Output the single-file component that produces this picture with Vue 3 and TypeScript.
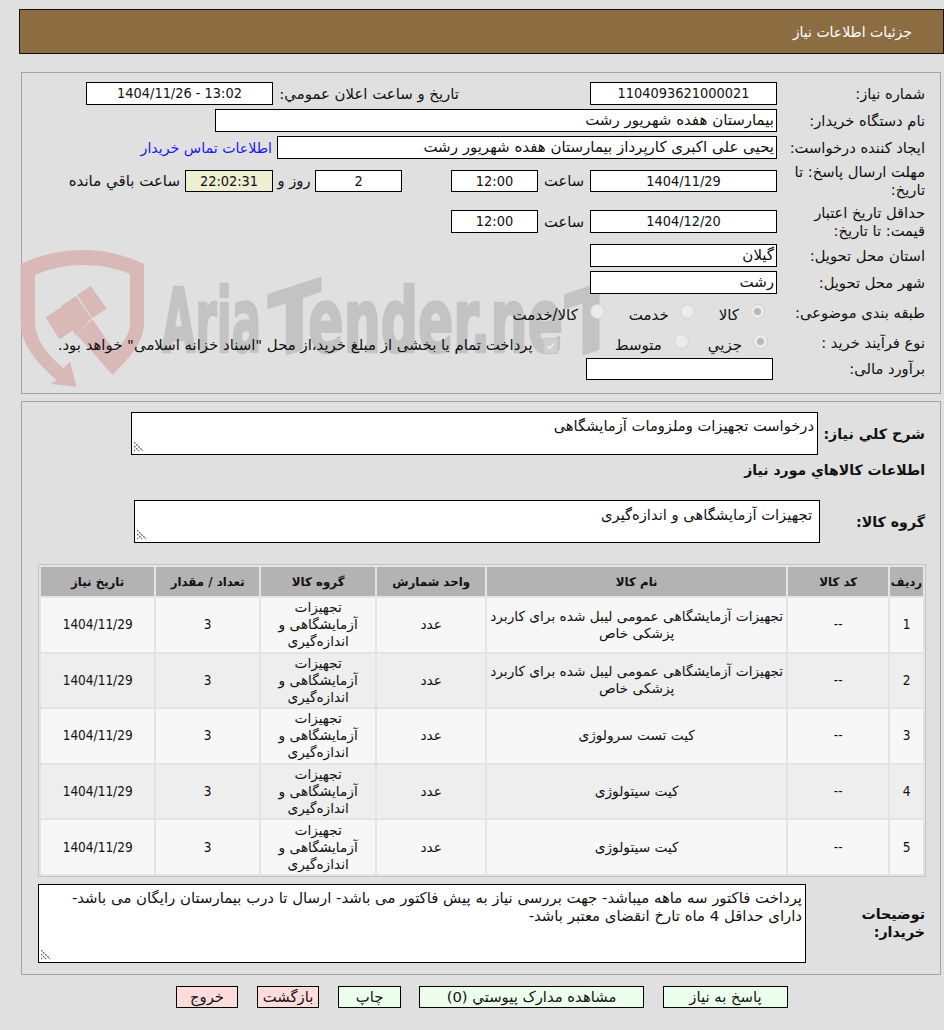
<script setup lang="ts">
interface Row { id: number; name: string; unit: string; group: string; qty: number; date: string }
const groupName = 'تجهیزات آزمایشگاهی و اندازه‌گیری'
const longName = 'تجهیزات آزمایشگاهی عمومی لیبل شده برای کاربرد پزشکی خاص'
const rows: Row[] = [
  { id: 1, name: longName, unit: 'عدد', group: groupName, qty: 3, date: '1404/11/29' },
  { id: 2, name: longName, unit: 'عدد', group: groupName, qty: 3, date: '1404/11/29' },
  { id: 3, name: 'کیت تست سرولوژی', unit: 'عدد', group: groupName, qty: 3, date: '1404/11/29' },
  { id: 4, name: 'کیت سیتولوژی', unit: 'عدد', group: groupName, qty: 3, date: '1404/11/29' },
  { id: 5, name: 'کیت سیتولوژی', unit: 'عدد', group: groupName, qty: 3, date: '1404/11/29' },
]
</script>

<template>
  <div class="page" dir="rtl">
    <header class="title">جزئیات اطلاعات نیاز</header>

    <section class="panel info">
      <svg class="mark" viewBox="0 0 1800 480" width="600" height="160" aria-hidden="true">
        <path class="pink" d="M62 72C120 45 180 30 250 30C320 30 380 48 432 72L432 250C432 310 385 355 338 405L228 282L277 238L345 335C370 310 390 280 390 250L390 102C350 85 300 75 250 75C200 75 150 85 105 105L105 240C105 300 140 340 190 385L210 365L230 440L152 432L170 420C110 370 62 310 62 250Z" />
        <path class="pink" d="M137 232L183 202L225 268L178 298ZM183 198L228 168L275 235L225 285ZM232 165L272 138L320 205L277 235Z" />
        <text class="brand" x="485" y="335" textLength="298" lengthAdjust="spacingAndGlyphs">Aria</text>
        <text class="brand" transform="translate(805 360) skewY(-18)" textLength="157" lengthAdjust="spacingAndGlyphs">T</text>
        <text class="brand" x="925" y="335" textLength="764" lengthAdjust="spacingAndGlyphs">ender.ne</text>
        <text class="brand" transform="translate(1695 360) skewY(-18)" textLength="156" lengthAdjust="spacingAndGlyphs">T</text>
      </svg>

      <div class="row">
        <span class="lbl">شماره نیاز:</span>
        <span class="box c num w187">1104093621000021</span>
        <span class="announce">تاریخ و ساعت اعلان عمومي:</span>
        <span class="box c num w187" dir="ltr">1404/11/26 - 13:02</span>
      </div>
      <div class="row">
        <span class="lbl">نام دستگاه خریدار:</span>
        <span class="box w562">بیمارستان هفده شهریور رشت</span>
      </div>
      <div class="row">
        <span class="lbl">ایجاد کننده درخواست:</span>
        <span class="box w500">یحیی علی اکبری کارپرداز بیمارستان هفده شهریور رشت</span>
        <a class="contact">اطلاعات تماس خریدار</a>
      </div>
      <div class="row r2">
        <span class="lbl wrap">مهلت ارسال پاسخ: تا تاریخ:</span>
        <span class="box c num w187 h22">1404/11/29</span>
        <span class="saat">ساعت</span>
        <span class="box c num w87 h22">12:00</span>
        <span class="box c num w87 h22 days">2</span>
        <span class="rooz">روز و</span>
        <span class="box c num timer h22">22:02:31</span>
        <span class="remain">ساعت باقي مانده</span>
      </div>
      <div class="row r2b">
        <span class="lbl wrap">حداقل تاریخ اعتبار قیمت: تا تاریخ:</span>
        <span class="box c num w187">1404/12/20</span>
        <span class="saat">ساعت</span>
        <span class="box c num w87">12:00</span>
      </div>
      <div class="row">
        <span class="lbl">استان محل تحویل:</span>
        <span class="box w187">گیلان</span>
      </div>
      <div class="row">
        <span class="lbl">شهر محل تحویل:</span>
        <span class="box w187">رشت</span>
      </div>
      <div class="row r3 first-opts">
        <span class="lbl">طبقه بندی موضوعی:</span>
        <span class="radio on m12"></span><span class="opt m11">کالا</span>
        <span class="radio m24"></span><span class="opt m11">خدمت</span>
        <span class="radio m24"></span><span class="opt m12">کالا/خدمت</span>
      </div>
      <div class="row r3">
        <span class="lbl">نوع فرآیند خرید :</span>
        <span class="radio on m9"></span><span class="opt m11">جزیي</span>
        <span class="radio m19"></span><span class="opt m12">متوسط</span>
        <span class="check">
          <svg viewBox="0 0 16 16" width="16" height="16"><path d="M4 8l3 3 5-6" fill="none" stroke="#ececec" stroke-width="2" /></svg>
        </span>
        <span class="opt m10 pay">پرداخت تمام یا بخشی از مبلغ خرید،از محل "اسناد خزانه اسلامی" خواهد بود.</span>
      </div>
      <div class="row r5">
        <span class="lbl">برآورد مالی:</span>
        <span class="box w187 h22 est"></span>
      </div>
    </section>

    <section class="panel needs">
      <div class="desc-row">
        <span class="blbl dlbl">شرح کلي نیاز:</span>
        <div class="area a1">درخواست تجهیزات وملزومات آزمایشگاهی
          <svg class="grip" viewBox="0 0 10 10" width="10" height="10"><path d="M0 0L9 9M0 4L5 9M0 8L1 9" stroke="#666" stroke-width="1.300" stroke-dasharray="2 1" fill="none" /></svg>
        </div>
      </div>
      <h3 class="subhead">اطلاعات کالاهاي مورد نیاز</h3>
      <div class="group-row">
        <span class="blbl glbl">گروه کالا:</span>
        <div class="area a2">تجهیزات آزمایشگاهی و اندازه‌گیری
          <svg class="grip" viewBox="0 0 10 10" width="10" height="10"><path d="M0 0L9 9M0 4L5 9M0 8L1 9" stroke="#666" stroke-width="1.300" stroke-dasharray="2 1" fill="none" /></svg>
        </div>
      </div>

      <div class="table-wrap">
        <table>
          <colgroup>
            <col class="k1" /><col class="k2" /><col class="k3" /><col class="k4" /><col class="k5" /><col class="k6" /><col class="k7" />
          </colgroup>
          <thead>
            <tr>
              <th>ردیف</th><th>کد کالا</th><th>نام کالا</th><th>واحد شمارش</th><th>گروه کالا</th><th>تعداد / مقدار</th><th>تاریخ نیاز</th>
            </tr>
          </thead>
          <tbody>
            <tr v-for="r in rows" :key="r.id">
              <td class="num">{{ r.id }}</td>
              <td class="num">--</td>
              <td>{{ r.name }}</td>
              <td>{{ r.unit }}</td>
              <td class="grp">{{ r.group }}</td>
              <td class="num">{{ r.qty }}</td>
              <td class="num">{{ r.date }}</td>
            </tr>
          </tbody>
        </table>
      </div>

      <div class="notes-row">
        <span class="blbl nlbl">توضیحات خریدار:</span>
        <div class="area a3">پرداخت فاکتور سه ماهه میباشد- جهت بررسی نیاز به پیش فاکتور می باشد- ارسال تا درب بیمارستان رایگان می باشد-<br />دارای حداقل 4 ماه تارخ انقضای معتبر باشد-
          <svg class="grip" viewBox="0 0 10 10" width="10" height="10"><path d="M0 0L9 9M0 4L5 9M0 8L1 9" stroke="#666" stroke-width="1.300" stroke-dasharray="2 1" fill="none" /></svg>
        </div>
      </div>
    </section>

    <footer class="actions">
      <button class="btn g b1">پاسخ به نیاز</button>
      <button class="btn g b2">مشاهده مدارک پیوستي (0)</button>
      <button class="btn g b3">چاپ</button>
      <button class="btn r b4">بازگشت</button>
      <button class="btn r b5">خروج</button>
    </footer>
  </div>
</template>

<style>
html, body { margin: 0; background: #e0e0e0; }
</style>

<style scoped>
.page {
  width: 944px; height: 1030px; box-sizing: border-box; padding-top: 9px;
  background: #e0e0e0; color: #111; overflow: hidden;
  font-family: "DejaVu Sans", sans-serif; font-size: 14.700px; line-height: 18px;
}
.num { font-family: "DejaVu Sans Condensed", "DejaVu Sans", sans-serif; font-size: 14.400px; }
.title {
  box-sizing: border-box; height: 45px; width: 925px;
  background: #8c6d42; border: 1px solid #111; color: #fff; padding: 13px 31px 0 0;
  font-size: 14px;
}
.panel { border: 1px solid #a3a3a3; box-sizing: border-box; margin-right: 3px; width: 920px; position: relative; }
.info { height: 322px; margin-top: 18px; padding-top: 7px; }
.mark { position: absolute; left: -22px; top: 167px; direction: ltr; pointer-events: none; }
.pink { fill: #d9b8b8; }
.brand {
  font-family: "DejaVu Sans Condensed", "DejaVu Sans", sans-serif; font-weight: 700; font-size: 267px;
  fill: #c3c3c3; stroke: #c3c3c3; stroke-width: 8px; stroke-linejoin: round;
}
.row { display: flex; align-items: center; height: 27px; position: relative; }
.lbl { width: 163px; box-sizing: border-box; padding-right: 15px; flex: none; white-space: nowrap; }
.lbl.wrap { white-space: normal; padding-left: 12px; }
.box {
  box-sizing: border-box; height: 23px; background: #fff; border: 1px solid #000; padding: 0 2px;
  line-height: 21px; flex: none; white-space: nowrap; overflow: hidden; font-size: 15px;
}
.box.num { font-size: 14.400px; }
.c { text-align: center; }
.h22 { height: 22px; line-height: 20px; }
.w187 { width: 187px; }
.w562 { width: 562px; }
.w500 { width: 500px; }
.w87 { width: 87px; }
.announce { margin-right: 131px; width: 186px; box-sizing: border-box; flex: none; white-space: nowrap; font-size: 14.900px; }
.contact { color: #1a1aee; margin-right: 5px; white-space: nowrap; font-size: 14.200px; }
.r2 { height: 40px; }
.r2b { height: 41px; }
.saat { width: 52px; text-align: center; flex: none; }
.days { margin-right: 49px; }
.rooz { width: 42px; text-align: center; flex: none; white-space: nowrap; }
.timer { width: 88px; background: #eeeed0; }
.remain { margin-right: 5px; white-space: nowrap; font-size: 15px; }
.r3 { height: 30px; }
.first-opts { margin-top: 2px; }
.radio {
  box-sizing: border-box; width: 15px; height: 15px; border-radius: 50%; border: 1px solid #d2d2d2; background: #ebebeb;
  flex: none; margin-top: -3px; position: relative;
}
.radio.on::after { content: ""; position: absolute; inset: 3px; border-radius: 50%; background: #b8b8b8; }
.opt { white-space: nowrap; margin-top: 4px; flex: none; font-size: 15px; }
.pay { font-size: 14.900px; }
.m9 { margin-right: 9px; }
.m10 { margin-right: 10px; }
.m11 { margin-right: 11px; }
.m12 { margin-right: 12px; }
.m19 { margin-right: 19px; }
.m24 { margin-right: 24px; }
.check {
  width: 15px; height: 16px; margin: 5px 57px 0 0; flex: none; background: #cfcfcf; border: 1px solid #c4c4c4;
  box-sizing: border-box; display: block; line-height: 0;
}
.check svg { width: 13px; height: 14px; }
.r5 { height: 22px; }
.est { margin-right: 4px; }

.needs { margin-top: 7px; height: 574px; padding-top: 10px; }
.blbl { font-weight: 700; font-size: 14.200px; white-space: nowrap; flex: none; box-sizing: border-box; }
.desc-row { display: flex; align-items: center; height: 43px; padding-right: 15px; }
.dlbl { width: 107px; }
.area {
  box-sizing: border-box; background: #fff; border: 1px solid #000; position: relative; line-height: 18px; font-size: 14.700px; flex: none;
}
.a1 { width: 687px; height: 43px; padding: 4px 3px 0; }
.subhead { margin: 5px 15px 0 0; font-size: 14px; line-height: 20px; }
.group-row { display: flex; align-items: center; height: 43px; margin-top: 20px; padding-right: 15px; }
.glbl { width: 105px; }
.a2 { width: 686px; height: 43px; padding: 5px 7px 0; }
.grip { position: absolute; left: 2px; bottom: 2px; }
.table-wrap { margin: 21px 14px 0 0; width: 888px; box-sizing: border-box; border: 1px solid #c4c4c4; background: #e4e4e4; }
table { border-collapse: separate; border-spacing: 2px; width: 886px; table-layout: fixed; font-size: 13.700px; }
.k1 { width: 33px; } .k2 { width: 99.700px; } .k3 { width: 299.300px; } .k4 { width: 107.700px; } .k5 { width: 114.300px; } .k6 { width: 102.700px; } .k7 { width: 113.300px; }
th { background: #b3b3b3; height: 29px; padding: 0; font-weight: 700; font-size: 11.800px; }
td { height: 53.600px; padding: 0 1px; text-align: center; background: #f7f7f7; line-height: 17px; }
td.num { font-size: 13.500px; }
tbody tr:nth-child(even) td { background: #eeeeee; }
.grp { padding: 0 6px; }
.notes-row { display: flex; align-items: center; margin-top: 7px; padding-right: 15px; }
.nlbl { width: 119px; white-space: normal; line-height: 18px; padding-left: 30px; }
.a3 { width: 768px; height: 79px; padding: 4px 3px 0; font-size: 14.900px; }
.actions { display: flex; margin-top: 11px; padding-right: 156px; }
.btn {
  box-sizing: border-box; height: 22px; border: 1px solid #000; font-family: inherit; font-size: 14.800px; color: #111; padding: 0; line-height: 20px;
  flex: none;
}
.g { background: #ecffec; }
.r { background: #ffdcdc; }
.b1 { width: 125px; margin-left: 19px; }
.b2 { width: 225px; margin-left: 18px; }
.b3 { width: 63px; margin-left: 19px; }
.b4 { width: 62px; margin-left: 19px; }
.b5 { width: 62px; }
</style>
